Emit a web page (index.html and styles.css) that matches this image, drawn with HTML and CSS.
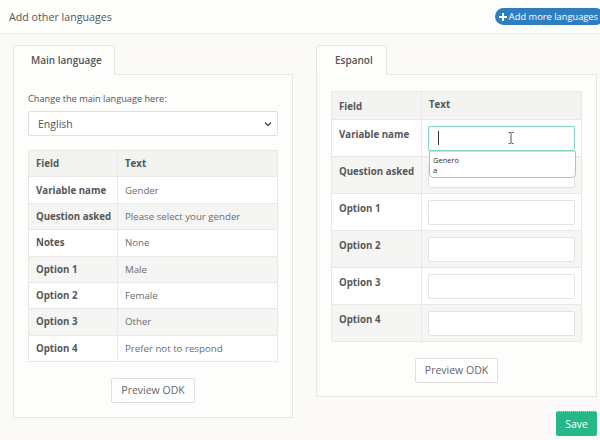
FILE: index.html
```html
<!DOCTYPE html>
<html>
<head>
<meta charset="utf-8">
<link rel="stylesheet" href="styles.css">
</head>
<body>
<header class="topbar">
  <span class="title">Add other languages</span>
  <button class="btn-add"><svg width="8" height="8" viewBox="0 0 8 8"><path d="M3 0h2v3h3v2H5v3H3V5H0V3h3z" fill="#fff"/></svg>Add more languages</button>
</header>
<main class="langs">
  <section class="col">
    <div class="tab">Main language</div>
    <div class="panel panel-main">
      <label class="lbl">Change the main language here:</label>
      <div class="select"><span>English</span><svg width="8" height="6" viewBox="0 0 8 6"><path d="M1 1.5l3 3 3-3" fill="none" stroke="#444" stroke-width="1.3"/></svg></div>
      <table class="ftable">
        <thead><tr><th class="key">Field</th><th>Text</th></tr></thead>
        <tbody>
          <tr><td class="key">Variable name</td><td class="val">Gender</td></tr>
          <tr><td class="key">Question asked</td><td class="val">Please select your gender</td></tr>
          <tr><td class="key">Notes</td><td class="val">None</td></tr>
          <tr><td class="key">Option 1</td><td class="val">Male</td></tr>
          <tr><td class="key">Option 2</td><td class="val">Female</td></tr>
          <tr><td class="key">Option 3</td><td class="val">Other</td></tr>
          <tr><td class="key">Option 4</td><td class="val">Prefer not to respond</td></tr>
        </tbody>
      </table>
      <div class="actions"><button class="btn">Preview ODK</button></div>
    </div>
  </section>
  <section class="col col-right">
    <div class="tab">Espanol</div>
    <div class="panel panel-trans">
      <table class="ftable itable">
        <thead><tr><th class="key">Field</th><th>Text</th></tr></thead>
        <tbody>
          <tr><td class="key">Variable name</td><td class="inp"><div class="ac-wrap"><div class="input focus"></div><span class="caret"></span><svg class="ibeam" width="6" height="12" viewBox="0 0 6 12"><path d="M0.5 0.5h1.7L3 1.3l0.8-0.8h1.7M3 1.3v9.4M0.5 11.5h1.7l0.8-0.8 0.8 0.8h1.7" fill="none" stroke="#444" stroke-width="0.9"/></svg><div class="ac-list"><div>Genero</div><div>a</div></div></div></td></tr>
          <tr><td class="key">Question asked</td><td class="inp"><div class="input"></div></td></tr>
          <tr><td class="key">Option 1</td><td class="inp"><div class="input"></div></td></tr>
          <tr><td class="key">Option 2</td><td class="inp"><div class="input"></div></td></tr>
          <tr><td class="key">Option 3</td><td class="inp"><div class="input"></div></td></tr>
          <tr><td class="key">Option 4</td><td class="inp"><div class="input"></div></td></tr>
        </tbody>
      </table>
      <div class="actions"><button class="btn">Preview ODK</button></div>
    </div>
    <button class="btn-save">Save</button>
  </section>
</main>
</body>
</html>
```

FILE: styles.css
```css
* { box-sizing: border-box; }
body {
  margin: 0;
  width: 600px;
  height: 440px;
  overflow: hidden;
  background: #fbfaf8;
  font-family: "Open Sans", "Liberation Sans", sans-serif;
  color: #555;
}
.topbar {
  display: flex;
  justify-content: space-between;
  align-items: center;
  height: 34px;
  padding: 0 0 0 9px;
  border-bottom: 1px solid #efeeeb;
  background: #fdfdfc;
}
.title { font-size: 10.7px; color: #555; }
.btn-add {
  display: flex;
  align-items: center;
  gap: 2px;
  height: 17px;
  margin-right: -4px;
  padding: 0 6px 0 4px;
  border: 0;
  border-radius: 9px;
  background: #2e7ebf;
  color: #fff;
  font-family: "Open Sans", sans-serif;
  font-size: 9.3px;
}
.langs {
  display: flex;
  align-items: flex-start;
  gap: 23px;
  padding: 11px 0 0 13px;
}
.col {
  display: flex;
  flex-direction: column;
  align-items: flex-start;
  width: 280px;
}
.col-right { width: 281px; }
.tab {
  position: relative;
  z-index: 1;
  height: 30px;
  margin-bottom: -1px;
  padding: 0 12px 0 17px;
  line-height: 28px;
  border: 1px solid #e6e5e2;
  border-bottom: 1px solid #fdfdfc;
  border-radius: 4px 4px 0 0;
  background: #fdfdfc;
  font-size: 10px;
  font-weight: 600;
  color: #555;
}
.col-right .tab { padding: 0 13px 0 18px; }
.panel {
  align-self: stretch;
  border: 1px solid #e8e7e4;
  background: #fdfdfc;
  padding: 0 14px 14px;
}
.panel-main { padding-top: 18px; }
.panel-trans { padding-top: 16px; padding-bottom: 13px; }
.lbl {
  display: block;
  font-size: 9.2px;
  line-height: 12px;
  color: #555;
}
.select {
  display: flex;
  align-items: center;
  justify-content: space-between;
  height: 25px;
  margin-top: 6px;
  padding: 0 5px 0 9px;
  border: 1px solid #e0dfdd;
  border-radius: 2px;
  background: #fff;
  font-size: 10.5px;
  color: #555;
}
.ftable {
  width: 100%;
  margin-top: 14px;
  border-collapse: collapse;
  table-layout: fixed;
  font-size: 9.7px;
  line-height: 13px;
  background: #fff;
}
.ftable th, .ftable td {
  padding: 6.2px 7px;
  border: 1px solid #e9e8e6;
  text-align: left;
  vertical-align: top;
}
.ftable th { font-weight: 700; color: #555; background: #f3f3f2; }
.ftable tbody tr:nth-child(even) { background: #f5f5f4; }
.ftable .key { width: 89px; font-weight: 700; white-space: nowrap; color: #575757; }
.ftable .val { color: #6c6c6c; }
.itable { margin-top: 0; }
.itable .key { width: 90px; padding-top: 8px; }
.itable td.inp { padding: 5.5px 6px 5.5px; }
.input {
  height: 25px;
  border: 1px solid #e4e3e1;
  border-radius: 2px;
  background: #fff;
}
.input.focus {
  border-color: #86d8bd;
  box-shadow: 0 0 1px #a8e6d2;
}
.ac-wrap { position: relative; }
.caret {
  position: absolute;
  left: 10px;
  top: 5px;
  width: 1px;
  height: 14px;
  background: #333;
}
.ibeam { position: absolute; left: 80px; top: 6px; }
.ac-list {
  position: absolute;
  z-index: 2;
  top: 25px;
  left: 1px;
  width: 147px;
  height: 27px;
  padding: 3px 3px;
  border: 1px solid #bdbcba;
  border-top-color: #d8d8d8;
  border-radius: 0 0 5px 5px;
  background: #fff;
  font-size: 7.5px;
  line-height: 10.5px;
  color: #333;
}
.actions { margin-top: 15px; text-align: center; align-self: stretch; }
.btn {
  height: 25px;
  padding: 0 9px;
  border: 1px solid #e0dfdd;
  border-radius: 2px;
  background: #fff;
  font-family: "Open Sans", sans-serif;
  font-size: 10.5px;
  color: #666;
}
.btn-save {
  align-self: flex-end;
  width: 41px;
  height: 25px;
  margin-top: 14px;
  border: 0;
  border-top: 1px dotted #9fe3c9;
  border-radius: 2px;
  background: #25b98a;
  color: #fff;
  font-family: "Open Sans", sans-serif;
  font-size: 10.5px;
}
```
